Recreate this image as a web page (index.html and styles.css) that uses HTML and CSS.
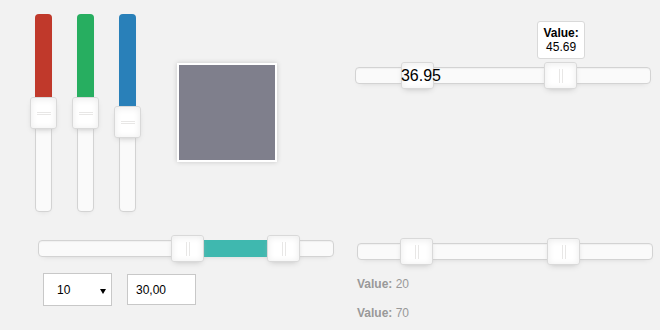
FILE: index.html
```html
<!DOCTYPE html>
<html>
<head>
<meta charset="utf-8">
<link rel="stylesheet" href="styles.css">
</head>
<body>
<div class="page">
  <div class="col-left">
    <div class="rgb-row">
      <div class="vtrack">
        <div class="vfill red" style="height:50%"></div>
        <div class="vhandle" style="top:50%"></div>
      </div>
      <div class="vtrack">
        <div class="vfill green" style="height:50%"></div>
        <div class="vhandle" style="top:50%"></div>
      </div>
      <div class="vtrack">
        <div class="vfill blue" style="height:54.5%"></div>
        <div class="vhandle" style="top:54.5%"></div>
      </div>
      <div class="swatch"></div>
    </div>

    <div class="htrack range">
      <div class="connect" style="left:50.5%;width:32.8%"></div>
      <div class="hhandle" style="left:50.5%"></div>
      <div class="hhandle" style="left:83.3%"></div>
    </div>

    <div class="inputs">
      <div class="select">
        <span class="select-value">10</span>
        <span class="select-arrow"></span>
      </div>
      <input class="field" type="text" value="30,00">
    </div>
  </div>

  <div class="col-right">
    <div class="htrack">
      <div class="hhandle text-handle" style="left:20.9%"><span class="handle-text">36.95</span></div>
      <div class="hhandle" style="left:69.6%">
        <div class="tooltip"><strong>Value:</strong><span>45.69</span></div>
      </div>
    </div>

    <div class="htrack second">
      <div class="hhandle" style="left:20%"></div>
      <div class="hhandle" style="left:70%"></div>
    </div>

    <p class="val first"><b>Value:</b> 20</p>
    <p class="val"><b>Value:</b> 70</p>
  </div>
</div>
</body>
</html>
```

FILE: styles.css
```css
* {
  box-sizing: border-box;
}

html, body {
  margin: 0;
  padding: 0;
  background: #f2f2f2;
  font-family: "Liberation Sans", Arial, sans-serif;
  width: 660px;
  height: 330px;
  overflow: hidden;
}

.page {
  display: grid;
  grid-template-columns: 355px 1fr;
}

.col-left {
  padding: 14px 0 0 30px;
}

.rgb-row {
  display: flex;
  align-items: flex-start;
  padding-left: 5px;
}

.vtrack {
  position: relative;
  width: 17px;
  height: 198px;
  background: #fafafa;
  border: 1px solid #d3d3d3;
  border-radius: 4px;
  box-shadow: inset 0 1px 1px #f0f0f0, 0 3px 6px -5px #bbb;
}

.vtrack + .vtrack {
  margin-left: 25px;
}

.vfill {
  position: absolute;
  top: -1px;
  left: -1px;
  right: -1px;
  border-radius: 4px 4px 0 0;
}

.red { background: #c0392b; }
.green { background: #27ae60; }
.blue { background: #2980b9; }

.vhandle {
  position: absolute;
  left: -6px;
  width: 27px;
  height: 32px;
  margin-top: -16px;
  background: #fff;
  border: 1px solid #d9d9d9;
  border-radius: 3px;
  box-shadow: inset 0 0 1px #fff, inset 0 1px 7px #ebebeb, 0 3px 6px -3px #bbb;
}

.vhandle::before,
.vhandle::after {
  content: "";
  position: absolute;
  left: 6px;
  width: 14px;
  height: 1px;
  background: #e8e7e6;
}

.vhandle::before { top: 14px; }
.vhandle::after { top: 16px; }

.swatch {
  width: 100px;
  height: 99px;
  margin: 49px 0 0 41px;
  background: rgb(127, 127, 140);
  border: 2px solid #fff;
  box-shadow: 0 0 5px rgba(0, 0, 0, 0.18);
}

.htrack {
  position: relative;
  width: 296px;
  height: 17px;
  background: #fafafa;
  border: 1px solid #d3d3d3;
  border-radius: 4px;
  box-shadow: inset 0 1px 1px #f0f0f0, 0 3px 6px -5px #bbb;
}

.range {
  margin: 28px 0 0 8px;
}

.connect {
  position: absolute;
  top: -1px;
  bottom: -1px;
  background: #3fb8af;
}

.hhandle {
  position: absolute;
  top: -6px;
  width: 33px;
  height: 27px;
  margin-left: -16.5px;
  background: #fff;
  border: 1px solid #d9d9d9;
  border-radius: 3px;
  box-shadow: inset 0 0 1px #fff, inset 0 1px 7px #ebebeb, 0 3px 6px -3px #bbb;
}

.hhandle::before,
.hhandle::after {
  content: "";
  position: absolute;
  top: 6px;
  width: 1px;
  height: 14px;
  background: #e8e7e6;
}

.hhandle::before { left: 14px; }
.hhandle::after { left: 17px; }

.text-handle::before,
.text-handle::after {
  display: none;
}

.handle-text {
  display: block;
  font-size: 16px;
  line-height: 25px;
  color: #000;
  white-space: nowrap;
  margin-left: -1px;
}

.tooltip {
  position: absolute;
  top: -42px;
  left: -8px;
  width: 48px;
  padding: 4px 0;
  display: flex;
  flex-direction: column;
  align-items: center;
  background: #fff;
  border: 1px solid #d9d9d9;
  border-radius: 3px;
  font-size: 12px;
  line-height: 14px;
  color: #000;
}

.tooltip strong {
  font-weight: bold;
}

.inputs {
  display: flex;
  align-items: center;
  gap: 15px;
  margin: 16px 0 0 13px;
}

.select {
  position: relative;
  display: flex;
  align-items: center;
  width: 69px;
  height: 33px;
  padding-left: 13px;
  background: #fff;
  border: 1px solid #c8c8c8;
  font-size: 12px;
  color: #000;
}

.select-arrow {
  position: absolute;
  left: 56px;
  top: 15px;
  width: 0;
  height: 0;
  border-left: 3px solid transparent;
  border-right: 3px solid transparent;
  border-top: 5px solid #000;
}

.field {
  width: 69px;
  height: 31px;
  margin: 0;
  padding: 0 0 0 8px;
  background: #fff;
  border: 1px solid #c8c8c8;
  border-radius: 0;
  font-family: "Liberation Sans", Arial, sans-serif;
  font-size: 12px;
  color: #000;
  outline: none;
}

.col-right {
  padding-top: 67px;
}

.htrack.second {
  margin: 159px 0 0 2px;
}

.val {
  margin: 15px 0 0 2px;
  font-size: 12px;
  line-height: 14px;
  color: #999;
}

.val.first {
  margin-top: 17px;
}

.val b {
  color: #999;
}
```
